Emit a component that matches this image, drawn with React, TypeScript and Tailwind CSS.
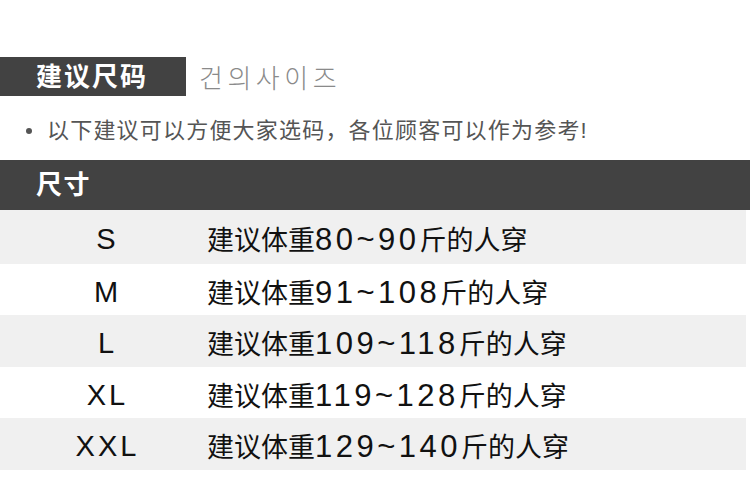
import React from 'react';

const rows = [
  { size: 'S', range: '80~90', bg: 'bg-[#f0f0f0]', h: 'h-[54px]' },
  { size: 'M', range: '91~108', bg: 'bg-white', h: 'h-[51px]' },
  { size: 'L', range: '109~118', bg: 'bg-[#f0f0f0]', h: 'h-[52px]' },
  { size: 'XL', range: '119~128', bg: 'bg-white', h: 'h-[51px]' },
  { size: 'XXL', range: '129~140', bg: 'bg-[#f0f0f0]', h: 'h-[52px]' },
];

const font = { fontFamily: '"Liberation Sans", "Noto Sans CJK SC", sans-serif' };

const App = () => {
  return (
    <div className="w-[750px] h-[479px] bg-white pt-[57px] overflow-hidden" style={font}>
      {/* Title */}
      <div className="flex items-center">
        <div className="w-[186px] h-[39px] bg-[#424242] flex items-center pl-[36px]">
          <span className="text-white text-[26px] font-bold tracking-[2px] leading-none">建议尺码</span>
        </div>
        <span
          className="ml-[13px] text-[26px] font-light tracking-[4.5px] text-[#8a8a8a] leading-none"
          style={{ fontFamily: '"Noto Sans CJK KR", sans-serif' }}
        >
          건의사이즈
        </span>
      </div>

      {/* Note */}
      <div className="mt-[20px] h-[30px] flex items-center pl-[26px] text-[#555] text-[22px] tracking-[1.2px]">
        <span className="w-[6px] h-[6px] rounded-full bg-[#555] mr-[15px]" />
        <span className="leading-none">以下建议可以方便大家选码，各位顾客可以作为参考!</span>
      </div>

      {/* Table */}
      <div className="mt-[14px]">
        <div className="h-[50px] bg-[#424242] flex items-center pl-[36px]">
          <span className="text-white text-[26px] font-bold tracking-[1.5px] leading-none">尺寸</span>
        </div>
        {rows.map((r) => (
          <div key={r.size} className={`w-[746px] ${r.h} ${r.bg} flex items-center pt-[5px] text-[#111]`}>
            <div className="w-[207px] pl-[8px] text-center text-[29px] tracking-[3px] leading-none">{r.size}</div>
            <div className="text-[27px] leading-none flex items-baseline">
              <span>建议体重</span>
              <span className="text-[31px] tracking-[3.5px]">{r.range}</span>
              <span>斤的人穿</span>
            </div>
          </div>
        ))}
      </div>
    </div>
  );
};

export default App;
